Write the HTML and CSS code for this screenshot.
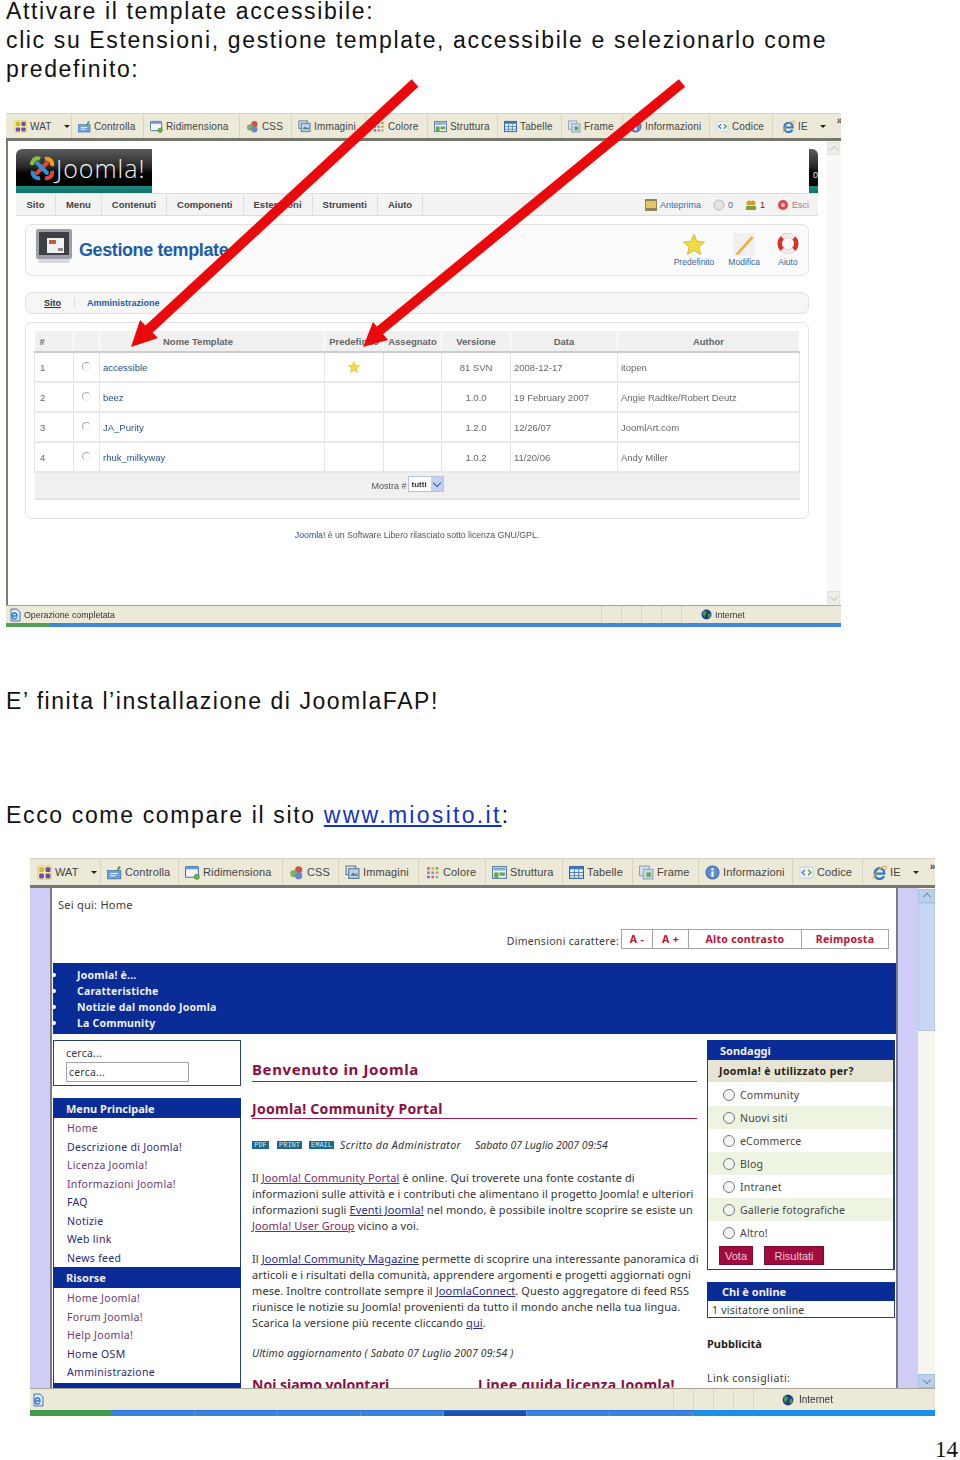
FILE: index.html
```html
<!DOCTYPE html>
<html lang="it">
<head>
  <meta charset="UTF-8" />
  <title>Attivare il template accessibile</title>
  <link rel="stylesheet" href="styles.css">
</head>
<body>
  <svg class="sprite" width="0" height="0">
    <symbol id="i-wat" viewBox="0 0 14 14"><rect x=".5" y=".5" width="13" height="13" rx="1.500" fill="#f2e8a8" stroke="#e0c860" stroke-width=".6"/><rect x="2" y="2" width="4.500" height="4.500" rx="1" fill="#d9b52c"/><rect x="8" y="2" width="4.500" height="4.500" rx="1" fill="#6a4fb0"/><rect x="2" y="8" width="4.500" height="4.500" rx="1" fill="#6a4fb0"/><rect x="8" y="8" width="4.500" height="4.500" rx="1" fill="#6a4fb0"/></symbol>
    <symbol id="i-check" viewBox="0 0 14 14"><rect x="0" y="5" width="13" height="8" fill="#6f9fd8" stroke="#3f6ea8" stroke-width=".6"/><path d="M3 8h7M3 10h5" stroke="#fff"/><path d="M9 5l2-4 2 1-3 4z" fill="#4f9a3f"/></symbol>
    <symbol id="i-resize" viewBox="0 0 14 14"><rect x=".5" y="1.5" width="12" height="10" rx="1" fill="#f4f6fa" stroke="#4f6f9f"/><rect x=".5" y="1.5" width="12" height="2.5" fill="#6f95cf"/><circle cx="11" cy="11" r="2.4" fill="#6fb04f" stroke="#3f7a2f" stroke-width=".6"/></symbol>
    <symbol id="i-css" viewBox="0 0 14 14"><circle cx="9" cy="4.5" r="3.4" fill="#d5504a"/><circle cx="4.5" cy="8" r="3.4" fill="#7fae68"/><circle cx="9" cy="10" r="3.4" fill="#6d86c4"/></symbol>
    <symbol id="i-img" viewBox="0 0 14 14"><rect x="1" y="1" width="9" height="8" fill="#dfe8f2" stroke="#54758f"/><rect x="3.5" y="3.5" width="9.5" height="9" fill="#bcd2e6" stroke="#54758f"/><path d="M5 10l2.5-3 2 2 1.5-1.5 1 2.5z" fill="#54758f"/></symbol>
    <symbol id="i-color" viewBox="0 0 14 14"><g><rect x="2" y="2" width="2.4" height="2.4" fill="#e05a4a"/><rect x="6" y="2" width="2.4" height="2.4" fill="#e0b040"/><rect x="10" y="2" width="2.4" height="2.4" fill="#70b050"/><rect x="2" y="6" width="2.4" height="2.4" fill="#c060b0"/><rect x="6" y="6" width="2.4" height="2.4" fill="#50a0c0"/><rect x="10" y="6" width="2.4" height="2.4" fill="#e09050"/><rect x="2" y="10" width="2.4" height="2.4" fill="#6070c0"/><rect x="6" y="10" width="2.4" height="2.4" fill="#d06080"/><rect x="10" y="10" width="2.4" height="2.4" fill="#80c080"/></g></symbol>
    <symbol id="i-struct" viewBox="0 0 14 14"><rect x=".5" y="1.5" width="13" height="11" fill="#e8eff6" stroke="#5b7fa0"/><rect x="1.5" y="2.5" width="11" height="2.5" fill="#7fa6cc"/><rect x="2" y="7" width="4" height="5" fill="#6aa34f"/><rect x="7" y="7" width="5" height="3" fill="#6aa34f"/></symbol>
    <symbol id="i-table" viewBox="0 0 14 14"><rect x=".5" y="1.5" width="13" height="11" fill="#eaf0f8" stroke="#2f5f9f"/><rect x=".5" y="1.5" width="13" height="2.5" fill="#3f74b8"/><path d="M5 4v8M9 4v8M1 7h12M1 10h12" stroke="#3f74b8" stroke-width=".8"/></symbol>
    <symbol id="i-frame" viewBox="0 0 14 14"><rect x=".5" y="1" width="9" height="9" fill="#d8e6ee" stroke="#88a4b8"/><rect x="4" y="4" width="9" height="9" fill="#c4dae6" stroke="#88a4b8"/><rect x="7" y="7" width="4" height="4" fill="#6aa34f"/></symbol>
    <symbol id="i-info" viewBox="0 0 14 14"><circle cx="7" cy="7" r="6" fill="#5f8fd0" stroke="#3a64a8"/><rect x="6" y="6" width="2" height="5" fill="#fff"/><rect x="6" y="3" width="2" height="2" fill="#fff"/></symbol>
    <symbol id="i-code" viewBox="0 0 14 14"><rect x="1" y="2" width="12" height="10" rx="1" fill="#f4f6fa" stroke="#c9d4e4"/><path d="M5.5 4.5L3 7l2.5 2.500" fill="none" stroke="#4f80c0" stroke-width="1.400"/><path d="M8.500 4.500L11 7 8.500 9.500" fill="none" stroke="#58a040" stroke-width="1.400"/></symbol>
    <symbol id="i-ie" viewBox="0 0 14 14"><path d="M2.500 8h9c0-3-2-5-4.500-5S2.500 5 2.500 8s2 5 4.500 5c2 0 3.500-1 4.200-2.500" fill="none" stroke="#2f78cc" stroke-width="2.200"/><path d="M1 13C3 6 9 1 13 1c1 1 0 3-1 4" fill="none" stroke="#e0b040"/></symbol>
    <symbol id="i-globe" viewBox="0 0 14 14"><circle cx="7" cy="7" r="6.300" fill="#1f3f7f"/><path d="M3 3c2-1 4 0 4 2S4 8 5 10 2 8 2 6zM9 6c2-1 4 0 3 3s-3 3-3 1z" fill="#3fa04f"/></symbol>
    <symbol id="i-page" viewBox="0 0 14 14"><path d="M3 1h6l3 3v9H3z" fill="#dce8f6" stroke="#4f77a8"/><path d="M4 8h5c0-2-1-3-2.500-3S4 6 4 8s1 3 2.500 3c1 0 2-.5 2.500-1.500" fill="none" stroke="#2f78cc" stroke-width="1.300"/></symbol>
    <symbol id="i-star" viewBox="0 0 22 22"><path d="M11 1l3 7 7.500.6-5.700 4.900 1.800 7.400L11 17l-6.600 3.900 1.800-7.400L.5 8.600 8 8z" fill="#f4dc3c" stroke="#c9a828" stroke-width=".8"/></symbol>
  </svg>

  <p class="lead">Attivare il template accessibile:<br>clic su Estensioni, gestione template, accessibile e selezionarlo come<br>predefinito:</p>

  <div class="win win-a">
    <div class="tb">
      <span class="tb-item"><svg><use href="#i-wat"/></svg>WAT<i class="caret"></i></span>
      <span class="tb-item"><svg><use href="#i-check"/></svg>Controlla</span>
      <span class="tb-item"><svg><use href="#i-resize"/></svg>Ridimensiona</span>
      <span class="tb-item"><svg><use href="#i-css"/></svg>CSS</span>
      <span class="tb-item"><svg><use href="#i-img"/></svg>Immagini</span>
      <span class="tb-item"><svg><use href="#i-color"/></svg>Colore</span>
      <span class="tb-item"><svg><use href="#i-struct"/></svg>Struttura</span>
      <span class="tb-item"><svg><use href="#i-table"/></svg>Tabelle</span>
      <span class="tb-item"><svg><use href="#i-frame"/></svg>Frame</span>
      <span class="tb-item"><svg><use href="#i-info"/></svg>Informazioni</span>
      <span class="tb-item"><svg><use href="#i-code"/></svg>Codice</span>
      <span class="tb-item tb-last"><svg><use href="#i-ie"/></svg>IE<i class="caret"></i><b class="more">»</b></span>
    </div>

    <div class="site">
      <div class="admin">
        <div class="brand">
          <div class="logo">
            <svg viewBox="0 0 26 26" width="26" height="26">
              <path d="M8 18L18 8" stroke="#e8452c" stroke-width="4" stroke-linecap="round"/>
              <path d="M8 8l10 10" stroke="#2f8fd8" stroke-width="4" stroke-linecap="round"/>
              <path d="M3 10c0-5 4-8 8-6" fill="none" stroke="#8fc03c" stroke-width="4"/>
              <path d="M16 4c4-1 8 2 7 7" fill="none" stroke="#f09a20" stroke-width="4"/>
              <path d="M4 16c-1 4 2 8 7 7" fill="none" stroke="#2f8fd8" stroke-width="4"/>
              <path d="M23 16c1 4-2 8-7 7" fill="none" stroke="#e8452c" stroke-width="4"/>
            </svg>
            <span class="logo-text">Joomla!</span>
          </div>
          <div class="logo-end">0</div>
        </div>

        <div class="nav">
          <span>Sito</span><span>Menu</span><span>Contenuti</span><span>Componenti</span><span>Estensioni</span><span>Strumenti</span><span>Aiuto</span>
          <div class="nav-right">
            <svg class="ni" viewBox="0 0 12 12"><rect width="12" height="12" fill="#8f8454"/><rect x="1" y="2" width="10" height="7" fill="#e0c860"/></svg><a>Anteprima</a>
            <svg class="ni ni-gap" viewBox="0 0 12 12"><circle cx="6" cy="6" r="5" fill="#e4e4e4" stroke="#bbb"/></svg><a>0</a>
            <svg class="ni ni-gap" viewBox="0 0 12 12"><circle cx="4" cy="4" r="2.500" fill="#c9a030"/><circle cx="8" cy="4" r="2.500" fill="#c9a030"/><rect x="1" y="7" width="10" height="4" fill="#7fa040"/></svg><em>1</em>
            <svg class="ni ni-gap" viewBox="0 0 12 12"><circle cx="6" cy="6" r="5" fill="#d84a50"/><circle cx="6" cy="6" r="2" fill="#f4c4c4"/></svg><a class="exit">Esci</a>
          </div>
        </div>

        <div class="title-box">
          <svg class="tpl-icon" viewBox="0 0 36 34"><rect width="36" height="30" rx="2" fill="#9aa0a6"/><rect x="3" y="3" width="30" height="23" fill="#3c4044"/><rect x="11" y="9" width="17" height="15" fill="#eef0f2"/><rect x="13" y="11" width="7" height="4" fill="#c85a3a"/><rect x="22" y="19" width="5" height="3" fill="#888"/><rect x="2" y="30" width="32" height="4" rx="2" fill="#d4d8dc"/></svg>
          <h1>Gestione template</h1>
          <div class="actions">
            <div class="act act-star"><svg viewBox="0 0 22 22"><use href="#i-star"/></svg>Predefinito</div>
            <div class="act act-edit"><svg viewBox="0 0 22 24"><rect width="22" height="24" fill="#f0f0f0"/><path d="M2 22L19 3l2 2L5 23z" fill="#f0b040"/></svg>Modifica</div>
            <div class="act act-help"><svg viewBox="0 0 24 24"><circle cx="12" cy="11" r="9" fill="none" stroke="#d8342c" stroke-width="5"/><circle cx="12" cy="11" r="9" fill="none" stroke="#f2eeee" stroke-width="5" stroke-dasharray="14 14.270" stroke-dashoffset="-7.100"/></svg>Aiuto</div>
          </div>
        </div>

        <div class="sub-box"><u>Sito</u><span>Amministrazione</span></div>

        <div class="panel">
          <table class="tpl-table">
            <colgroup><col class="c1"><col class="c2"><col class="c3"><col class="c4"><col class="c5"><col class="c6"><col class="c7"><col class="c8"></colgroup>
            <thead>
              <tr><th class="left">#</th><th></th><th class="th-name">Nome Template</th><th>Predefinito</th><th>Assegnato</th><th>Versione</th><th>Data</th><th>Author</th></tr>
            </thead>
            <tbody>
              <tr><td>1</td><td class="mid"><i class="radio"></i></td><td><a>accessible</a></td><td class="mid"><svg class="mini-star" viewBox="0 0 22 22"><use href="#i-star"/></svg></td><td></td><td class="mid">81 SVN</td><td>2008-12-17</td><td>itopen</td></tr>
              <tr><td>2</td><td class="mid"><i class="radio"></i></td><td><a>beez</a></td><td></td><td></td><td class="mid">1.0.0</td><td>19 February 2007</td><td>Angie Radtke/Robert Deutz</td></tr>
              <tr><td>3</td><td class="mid"><i class="radio"></i></td><td><a>JA_Purity</a></td><td></td><td></td><td class="mid">1.2.0</td><td>12/26/07</td><td>JoomlArt.com</td></tr>
              <tr><td>4</td><td class="mid"><i class="radio"></i></td><td><a>rhuk_milkyway</a></td><td></td><td></td><td class="mid">1.0.2</td><td>11/20/06</td><td>Andy Miller</td></tr>
            </tbody>
            <tfoot>
              <tr><td colspan="8"><div class="pager">Mostra #<span class="select">tutti<i></i></span></div></td></tr>
            </tfoot>
          </table>
        </div>

        <p class="credit"><a>Joomla!</a> è un Software Libero rilasciato sotto licenza GNU/GPL.</p>
      </div>
      <div class="scroll scroll-a"><i></i><i class="down"></i></div>
    </div>

    <div class="status">
      <svg class="st-icon"><use href="#i-page"/></svg><span>Operazione completata</span>
      <div class="panels"><i></i><i></i><i></i><i></i><i></i></div>
      <svg class="st-globe"><use href="#i-globe"/></svg><span>Internet</span>
    </div>
    <div class="stripe"><i></i></div>
  </div>

  <p class="line line-done">E’ finita l’installazione di JoomlaFAP!</p>
  <p class="line line-site">Ecco come compare il sito <a href="#">www.miosito.it</a>:</p>

  <div class="win win-b">
    <div class="tb">
      <span class="tb-item"><svg><use href="#i-wat"/></svg>WAT<i class="caret"></i></span>
      <span class="tb-item"><svg><use href="#i-check"/></svg>Controlla</span>
      <span class="tb-item"><svg><use href="#i-resize"/></svg>Ridimensiona</span>
      <span class="tb-item"><svg><use href="#i-css"/></svg>CSS</span>
      <span class="tb-item"><svg><use href="#i-img"/></svg>Immagini</span>
      <span class="tb-item"><svg><use href="#i-color"/></svg>Colore</span>
      <span class="tb-item"><svg><use href="#i-struct"/></svg>Struttura</span>
      <span class="tb-item"><svg><use href="#i-table"/></svg>Tabelle</span>
      <span class="tb-item"><svg><use href="#i-frame"/></svg>Frame</span>
      <span class="tb-item"><svg><use href="#i-info"/></svg>Informazioni</span>
      <span class="tb-item"><svg><use href="#i-code"/></svg>Codice</span>
      <span class="tb-item tb-last"><svg><use href="#i-ie"/></svg>IE<i class="caret"></i><b class="more">»</b></span>
    </div>

    <div class="site">
      <div class="band"></div>
      <div class="portal">
        <div class="crumb">Sei qui: Home</div>
        <div class="fontbar">
          <span class="fontbar-label">Dimensioni carattere:</span>
          <a class="fb1">A -</a><a class="fb2">A +</a><a class="fb3">Alto contrasto</a><a class="fb4">Reimposta</a>
        </div>
        <ul class="topnav">
          <li>Joomla! è...</li>
          <li>Caratteristiche</li>
          <li>Notizie dal mondo Joomla</li>
          <li>La Community</li>
        </ul>

        <div class="cols">
          <div class="col-left">
            <div class="search">
              <span>cerca...</span>
              <div class="search-input">cerca...</div>
            </div>
            <h3 class="menu-head">Menu Principale</h3>
            <ul class="menu">
              <li class="v">Home</li>
              <li>Descrizione di Joomla!</li>
              <li class="v">Licenza Joomla!</li>
              <li class="v">Informazioni Joomla!</li>
              <li>FAQ</li>
              <li>Notizie</li>
              <li>Web link</li>
              <li>News feed</li>
            </ul>
            <h3 class="menu-head menu-head-2">Risorse</h3>
            <ul class="menu menu-2">
              <li class="v">Home Joomla!</li>
              <li class="v">Forum Joomla!</li>
              <li class="v">Help Joomla!</li>
              <li>Home OSM</li>
              <li>Amministrazione</li>
            </ul>
            <div class="menu-end"></div>
          </div>

          <div class="col-main">
            <h1 class="page-title">Benvenuto in Joomla</h1>
            <h2 class="art-title">Joomla! Community Portal</h2>
            <div class="meta">
              <i class="tag tag-pdf">PDF</i><i class="tag tag-print">PRINT</i><i class="tag tag-mail">EMAIL</i>
              <em class="by">Scritto da Administrator</em><em>Sabato 07 Luglio 2007 09:54</em>
            </div>
            <p class="para">Il <a class="v">Joomla! Community Portal</a> è online. Qui troverete una fonte costante di<br>informazioni sulle attività e i contributi che alimentano il progetto Joomla! e ulteriori<br>informazioni sugli <a>Eventi Joomla!</a> nel mondo, è possibile inoltre scoprire se esiste un<br><a class="v">Joomla! User Group</a> vicino a voi.</p>
            <p class="para">Il <a>Joomla! Community Magazine</a> permette di scoprire una interessante panoramica di<br>articoli e i risultati della comunità, apprendere argomenti e progetti aggiornati ogni<br>mese. Inoltre controllate sempre il <a>JoomlaConnect</a>. Questo aggregatore di feed RSS<br>riunisce le notizie su Joomla! provenienti da tutto il mondo anche nella tua lingua.<br>Scarica la versione più recente cliccando <a>qui</a>.</p>
            <p class="updated">Ultimo aggiornamento ( Sabato 07 Luglio 2007 09:54 )</p>
            <div class="more-heads"><span>Noi siamo volontari</span><span>Linee guida licenza Joomla!</span></div>
          </div>

          <div class="col-right">
            <h3 class="mod-head">Sondaggi</h3>
            <div class="poll">
              <div class="poll-q">Joomla! è utilizzato per?</div>
              <div class="opt"><i></i>Community</div>
              <div class="opt alt"><i></i>Nuovi siti</div>
              <div class="opt"><i></i>eCommerce</div>
              <div class="opt alt"><i></i>Blog</div>
              <div class="opt"><i></i>Intranet</div>
              <div class="opt alt"><i></i>Gallerie fotografiche</div>
              <div class="opt"><i></i>Altro!</div>
              <div class="poll-btns"><button class="btn-vote">Vota</button><button class="btn-res">Risultati</button></div>
            </div>
            <h3 class="mod-head mod-head-2">Chi è online</h3>
            <div class="online">1 visitatore online</div>
            <h4 class="ads">Pubblicità</h4>
            <p class="links">Link consigliati:</p>
          </div>
        </div>
      </div>
      <div class="band"></div>
      <div class="scroll scroll-b"><i></i><b></b><i class="down"></i></div>
    </div>

    <div class="status">
      <svg class="st-icon"><use href="#i-page"/></svg><span></span>
      <div class="panels"><i></i><i></i><i></i><i></i><i></i></div>
      <svg class="st-globe"><use href="#i-globe"/></svg><span>Internet</span>
    </div>
    <div class="taskbar"><i class="start"></i><i class="task"></i><i class="task"></i><i class="task"></i><i class="task"></i><i class="task task-on"></i><i class="task"></i><i class="task"></i><i class="tray"></i></div>
  </div>

  <p class="page-num">14</p>

  <svg class="arrows" viewBox="0 0 960 640" width="960" height="640">
    <path d="M415 83L148 330" stroke="#ea0a0c" stroke-width="10"/>
    <path d="M131 347L140 320L158 338Z" fill="#ea0a0c"/>
    <path d="M682 83L378 332" stroke="#ea0a0c" stroke-width="10"/>
    <path d="M363 347L373 322L388 340Z" fill="#ea0a0c"/>
  </svg>
</body>
</html>
```

FILE: styles.css
```css
* {
  margin: 0;
  padding: 0;
  box-sizing: border-box;
}
body {
  position: relative;
  width: 960px;
  height: 1460px;
  overflow: hidden;
  padding-left: 6px;
  background: #fff;
  color: #111;
  font-family: 'Liberation Sans', sans-serif;
}
ul {
  list-style: none;
}
i, em {
  font-style: normal;
}
.sprite {
  position: absolute;
}

/* document text */
.lead, .line {
  font-size: 23px;
  line-height: 29px;
  letter-spacing: 1.63px;
}
.lead {
  margin-top: -3px;
}
.line a {
  color: #1033c8;
  text-decoration: underline;
  letter-spacing: 2.3px;
}
.line-done {
  margin-top: 60px;
  letter-spacing: 1.55px;
}
.line-site {
  margin-top: 85px;
  letter-spacing: 1.65px;
}
.page-num {
  width: 952px;
  margin-top: 20px;
  text-align: right;
  font-family: 'Liberation Serif', serif;
  font-size: 23px;
  line-height: 28px;
}
.arrows {
  position: absolute;
  top: 0;
  left: 0;
  filter: blur(.3px);
}

/* browser window */
.win {
  filter: blur(.3px);
  overflow: hidden;
}
.win-a {
  width: 835px;
  height: 517px;
  margin-top: 26px;
  padding-top: 3px;
}
.win-b {
  width: 905px;
  height: 558px;
  margin: 28px 0 0 24px;
}
.tb {
  display: grid;
  height: 30px;
  background: #ece9d8;
  border-top: 1px solid #d6d3c0;
  border-bottom: 3px solid #77766c;
  color: #444;
}
.win-a .tb {
  grid-template-columns: 66px 72px 96px 52px 74px 62px 70px 64px 61px 87px 63px 68px;
  height: 28px;
  font-size: 10px;
}
.win-b .tb {
  grid-template-columns: 71px 78px 104px 56px 80px 67px 77px 70px 66px 94px 70px 72px;
  font-size: 11px;
}
.tb-item {
  display: flex;
  align-items: center;
  gap: 3px;
  padding-left: 6px;
  border-right: 1px solid #d8d4c0;
  white-space: nowrap;
  letter-spacing: .15px;
}
.tb-item svg {
  width: 13px;
  height: 13px;
  flex: none;
}
.win-b .tb-item svg {
  width: 15px;
  height: 15px;
}
.tb-item:first-child {
  padding-left: 8px;
}
.win-b .tb-item:first-child {
  padding-left: 7px;
}
.tb-last {
  border-right: 0;
  padding-left: 9px;
}
.caret {
  width: 0;
  height: 0;
  margin-left: 9px;
  border: 3px solid transparent;
  border-top: 3px solid #222;
  border-bottom: 0;
}
.more {
  margin: -12px 0 0 8px;
  font-size: 10px;
}
.site {
  display: flex;
  overflow: hidden;
}
.win-a .site {
  height: 464px;
}
.win-b .site {
  height: 500px;
}
.scroll {
  display: flex;
  flex-direction: column;
  justify-content: space-between;
}
.scroll i {
  display: flex;
  align-items: center;
  justify-content: center;
  flex: none;
}
.scroll i::after {
  content: "";
  width: 5px;
  height: 5px;
  margin-top: 2px;
  border: 1px solid #7a8aa8;
  border-width: 1px 0 0 1px;
  transform: rotate(45deg);
}
.scroll i.down::after {
  margin-top: -2px;
  transform: rotate(225deg);
}
.scroll-a {
  width: 15px;
  padding: 1px 1px 1px 0;
  background: #f8f8f6;
}
.scroll-a i {
  height: 13px;
  background: #eceee8;
  border: 1px solid #e2e2dc;
}
.scroll-a i::after {
  border-color: #c4c8c0;
}
.scroll-b {
  width: 17px;
  background: #f6f6f0;
  justify-content: flex-start;
  padding-top: 1px;
}
.scroll-b i {
  height: 14px;
  background: #bcd0ec;
  border: 1px solid #a8c0e4;
}
.scroll-b i.down {
  margin-top: 343px;
}
.scroll-b b {
  flex: none;
  height: 128px;
  background: #c8d8f4;
  border: 1px solid #b4c8e8;
}
.status {
  display: flex;
  align-items: center;
  background: #ece9d8;
  border-top: 1px solid #a8a698;
  color: #333;
  font-size: 8.800px;
}
.win-a .status {
  height: 18px;
  padding-left: 2px;
}
.win-b .status {
  height: 22px;
  padding-left: 1px;
  font-size: 10px;
}
.st-icon {
  width: 14px;
  height: 14px;
  margin-right: 2px;
}
.panels {
  display: flex;
  height: 100%;
}
.win-a .panels {
  margin-left: 486px;
}
.win-b .panels {
  margin-left: 626px;
}
.panels i {
  width: 20px;
  border-left: 1px solid #d8d5c4;
}
.st-globe {
  width: 11px;
  height: 11px;
  margin-right: 3px;
}
.win-b .st-globe {
  margin: 0 5px 0 9px;
  width: 12px;
  height: 12px;
}
.stripe {
  height: 4px;
  background: #3d86d8;
}
.stripe i {
  display: block;
  width: 44px;
  height: 4px;
  background: #54a058;
}
.taskbar {
  display: flex;
  height: 6px;
  background: #2a6fd0;
}
.taskbar .start {
  width: 82px;
  background: #3f9a4e;
}
.task {
  width: 83px;
  margin-top: 1px;
  border-right: 1px solid #5a94e0;
  background: #3f80dc;
}
.task-on {
  background: #1c4eaa;
}
.tray {
  flex: 1;
  background: #1e90e4;
}

/* joomla admin */
.admin {
  flex: 1;
  padding: 8px 9px 0 8px;
  background: #fff;
  border-left: 2px solid #7c7c70;
  color: #666;
  font-size: 9.500px;
}
.brand {
  display: flex;
  justify-content: space-between;
  height: 44px;
}
.logo, .logo-end {
  background: linear-gradient(#5c5c5c 0, #2a2a2a 40%, #050505 55%, #000 84%, #1e8a80 84%, #147068 100%);
  border-radius: 6px 6px 0 0;
}
.logo {
  display: flex;
  align-items: center;
  gap: 1px;
  width: 136px;
  padding: 0 0 6px 13px;
  border-top-right-radius: 0;
}
.logo-text {
  color: #f2f2f2;
  font-family: 'Open Sans', sans-serif;
  font-weight: 300;
  font-size: 25px;
  letter-spacing: 1px;
}
.logo-end {
  width: 9px;
  border-top-left-radius: 0;
  color: #eee;
  font-size: 9px;
  line-height: 52px;
  text-align: right;
  overflow: hidden;
}
.nav {
  display: flex;
  align-items: center;
  height: 23px;
  background: #f3f3f3;
  border-top: 1px solid #ddd;
  border-bottom: 1px solid #ddd;
  color: #444;
  font-weight: bold;
}
.nav > span {
  padding: 0 10px;
  height: 100%;
  line-height: 21px;
  border-right: 1px solid #ddd;
}
.nav > span:first-child {
  padding: 0 10.500px;
}
.nav-right {
  display: flex;
  align-items: center;
  margin-left: auto;
  padding-right: 9px;
  font-weight: normal;
  font-size: 9px;
}
.nav-right a {
  color: #3a6ca4;
}
.nav-right em {
  color: #333;
}
.nav-right .exit {
  color: #c07070;
}
.ni {
  width: 12px;
  height: 12px;
  margin-right: 3px;
}
.ni-gap {
  margin-left: 12px;
}
.title-box, .sub-box, .panel {
  margin: 8px 9px 0;
  border: 1px solid #e2e2e2;
  border-radius: 7px;
  background: #fbfbfb;
}
.title-box {
  display: flex;
  align-items: center;
  height: 52px;
  padding-left: 10px;
}
.tpl-icon {
  width: 36px;
  height: 34px;
  margin-top: -8px;
}
.title-box h1 {
  margin-left: 7px;
  color: #1c5ba8;
  font-size: 18px;
  letter-spacing: -.4px;
}
.actions {
  display: flex;
  margin-left: auto;
  padding-right: 9px;
  color: #3a6690;
  font-size: 8.500px;
}
.act {
  display: flex;
  flex-direction: column;
  align-items: center;
  gap: 1px;
  white-space: nowrap;
}
.act svg {
  width: 22px;
  height: 23px;
  margin-top: -1px;
}
.act-edit {
  margin-left: 14px;
}
.act-help {
  margin-left: 17px;
}
.sub-box {
  display: flex;
  align-items: center;
  height: 22px;
  margin-top: 16px;
  padding-left: 18px;
  background: #f6f6f6;
  color: #1c5ba8;
  font-weight: bold;
  font-size: 9px;
}
.sub-box u {
  padding-right: 13px;
  border-right: 1px solid #ddd;
  color: #333;
}
.sub-box span {
  padding-left: 12px;
}
.panel {
  height: 197px;
  padding: 8px 8px 0;
  background: #fff;
}
.tpl-table {
  width: 765px;
  table-layout: fixed;
  border-collapse: collapse;
}
.c1 { width: 39px; }
.c2 { width: 26px; }
.c3 { width: 225px; }
.c4 { width: 59px; }
.c5 { width: 58px; }
.c6 { width: 69px; }
.c7 { width: 107px; }
.c8 { width: 182px; }
.tpl-table th {
  height: 21px;
  background: #f0f0f0;
  border-right: 1px solid #fff;
  border-bottom: 2px solid #ccc;
  color: #666;
  font-size: 9.500px;
  white-space: nowrap;
  overflow: hidden;
}
.tpl-table th.left {
  text-align: left;
  padding-left: 5px;
}
.tpl-table th.th-name {
  padding-right: 28px;
}
.tpl-table td {
  height: 30px;
  padding-left: 3px;
  border-right: 1px solid #e4e4e4;
  border-bottom: 2px solid #e8e8e8;
  border-left: 1px solid #e4e4e4;
  white-space: nowrap;
}
.tpl-table td:first-child {
  padding-left: 5px;
}
.tpl-table td.mid {
  padding-left: 0;
  text-align: center;
}
.tpl-table a {
  color: #23558c;
}
.radio {
  display: inline-block;
  width: 9px;
  height: 9px;
  border: 1px solid #aaa;
  border-right-color: #eee;
  border-bottom-color: #eee;
  border-radius: 50%;
}
.mini-star {
  width: 12px;
  height: 12px;
  vertical-align: middle;
}
.tpl-table tfoot td {
  height: 27px;
  padding: 0;
  background: #f0f0f0;
  border: 0;
  border-top: 1px solid #bbb;
  border-bottom: 2px solid #e4e4e4;
}
.pager {
  display: flex;
  justify-content: center;
  align-items: center;
  padding-right: 24px;
  color: #555;
  font-size: 9px;
}
.select {
  display: flex;
  align-items: center;
  justify-content: space-between;
  width: 36px;
  height: 16px;
  margin: -3px 0 0 1px;
  padding-left: 3px;
  background: #fff;
  border: 1px solid #b4c4dc;
  color: #333;
  font-weight: bold;
  font-size: 8px;
}
.select i {
  display: flex;
  justify-content: center;
  width: 12px;
  height: 100%;
  background: #c2d2f0;
}
.select i::after {
  content: "";
  width: 5px;
  height: 5px;
  margin-top: 3px;
  border: 1.500px solid #3a5a98;
  border-width: 0 1.500px 1.500px 0;
  transform: rotate(45deg);
}
.credit {
  margin-top: 8px;
  line-height: 16px;
  text-align: center;
  color: #555;
  font-size: 8.800px;
  letter-spacing: -.05px;
}
.credit a {
  color: #23558c;
}

/* public site */
.band {
  width: 20px;
  background: #cfcdf6;
}
.band + .portal {
  border-left: 2px solid #7c7c84;
}
.portal {
  width: 848px;
  padding-left: 1px;
  background: #fff;
  border-right: 2px solid #7c7c84;
  font-family: 'Noto Sans', sans-serif;
  font-size: 10.500px;
  color: #3a3a3a;
}
.crumb {
  height: 34px;
  padding: 8px 0 0 5px;
  line-height: 18px;
  font-size: 11px;
  letter-spacing: .25px;
}
.fontbar {
  display: flex;
  align-items: center;
  justify-content: flex-end;
  height: 20px;
  margin: 7px 0 14px;
  padding-right: 7px;
  font-size: 10.500px;
  letter-spacing: .3px;
}
.fontbar-label {
  margin: 4px 2px 0 0;
}
.fontbar a {
  height: 20px;
  line-height: 18px;
  text-align: center;
  border: 1px solid #a4a4a4;
  border-left-width: 0;
  color: #c01030;
  font-weight: bold;
}
.fontbar .fb1 {
  width: 32px;
  border-left-width: 1px;
}
.fb2 {
  width: 36px;
}
.fb3 {
  width: 113px;
}
.fb4 {
  width: 87px;
}
.topnav {
  height: 71px;
  padding-top: 4px;
  background: #0a2c96;
  color: #f0f0f6;
  font-weight: bold;
  font-size: 10.500px;
  line-height: 16px;
  letter-spacing: .2px;
}
.topnav li {
  display: flex;
  align-items: center;
  gap: 21px;
}
.topnav li::before {
  content: "";
  width: 3px;
  height: 4px;
  background: #fff;
  border-radius: 0 2px 2px 0;
}
.cols {
  display: grid;
  grid-template-columns: 188px 446px 188px;
  column-gap: 10px;
  margin-top: 6px;
}
.search {
  height: 46px;
  padding: 4px 0 0 12px;
  border: 1px solid #2a3f78;
  line-height: 16px;
  font-size: 10.500px;
  letter-spacing: .2px;
}
.search-input {
  width: 123px;
  height: 20px;
  margin-top: 1px;
  padding-left: 2px;
  background: #fff;
  border: 1px solid #a0a4a8;
  line-height: 18px;
}
.menu-head {
  height: 20px;
  margin-top: 12px;
  padding-left: 13px;
  background: #0a2c96;
  color: #f0f0f6;
  font-size: 11px;
  line-height: 21px;
}
.menu-head-2 {
  height: 21px;
  margin: 0;
}
.menu {
  height: 149px;
  padding-top: 1px;
  border: 1px solid #2a3f78;
  border-width: 0 1px;
  color: #2a2a78;
}
.menu-2 {
  height: 95px;
}
.menu li {
  height: 18.550px;
  padding-left: 13px;
  line-height: 18.550px;
  letter-spacing: .3px;
}
.menu li.v {
  color: #6a3a72;
}
.menu-end {
  height: 8px;
  background: #0a2c96;
}
.col-main {
  padding-left: 1px;
  color: #333;
}
.page-title {
  padding: 19px 0 1px;
  border-bottom: 1px solid #a01c4a;
  color: #8e0c3e;
  font-size: 15px;
  line-height: 21px;
  letter-spacing: .6px;
}
.art-title {
  margin-top: 18px;
  border-bottom: 1px solid #a01c4a;
  color: #8e0c3e;
  font-size: 14px;
  line-height: 18px;
  letter-spacing: .3px;
}
.meta {
  display: flex;
  align-items: center;
  height: 16px;
  margin-top: 18px;
  font-style: italic;
  font-size: 10.500px;
}
.meta em {
  font-style: italic;
}
.tag {
  height: 8px;
  margin-right: 8px;
  background: #1a6a90;
  color: #cfe8f4;
  font-style: normal;
  font-family: 'Liberation Mono', monospace;
  font-size: 7px;
  line-height: 8px;
  text-align: center;
}
.tag-pdf {
  width: 17px;
}
.tag-print {
  width: 25px;
  margin-right: 7px;
}
.tag-mail {
  width: 25px;
  margin-right: 6px;
}
.by {
  width: 135px;
  letter-spacing: .4px;
}
.para {
  margin-top: 17px;
  line-height: 16px;
  font-size: 11px;
  letter-spacing: .1px;
  white-space: nowrap;
}
.para + .para {
  line-height: 15.900px;
}
.para a {
  color: #2a2a90;
  text-decoration: underline;
}
.para a.v {
  color: #7a2a6a;
}
.updated {
  margin-top: 14px;
  line-height: 16px;
  font-style: italic;
  font-size: 10.500px;
  letter-spacing: .15px;
}
.more-heads {
  display: flex;
  margin-top: 15px;
  color: #8e0c3e;
  font-weight: bold;
  font-size: 14px;
  line-height: 18px;
  letter-spacing: .3px;
  white-space: nowrap;
}
.more-heads span:first-child {
  width: 226px;
  letter-spacing: 0;
}
.mod-head {
  height: 20px;
  padding-left: 13px;
  background: #0a2c96;
  color: #f0f0f6;
  font-size: 11px;
  line-height: 21px;
}
.poll {
  height: 210px;
  border: 1px solid #2a3f78;
  border-top: 0;
  border-right-width: 2px;
  color: #444;
}
.poll-q {
  height: 22px;
  margin-bottom: 1px;
  padding-left: 11px;
  background: #e6e4d2;
  color: #222;
  font-weight: bold;
  line-height: 22px;
  letter-spacing: .4px;
}
.opt {
  display: flex;
  align-items: center;
  gap: 5px;
  height: 23px;
  padding-left: 15px;
  letter-spacing: .2px;
}
.opt.alt {
  background: #eef4e2;
}
.opt i {
  width: 12px;
  height: 12px;
  background: #f4f4f0;
  border: 1px solid #6c7a7c;
  border-radius: 50%;
}
.poll-btns {
  display: flex;
  gap: 11px;
  padding: 2px 0 0 11px;
}
.poll-btns button {
  height: 19px;
  background: #a10c40;
  border: 1px solid #7c0a34;
  color: #e8c8d0;
  font-family: 'Liberation Sans', sans-serif;
  font-size: 11px;
}
.btn-vote {
  width: 34px;
}
.btn-res {
  width: 60px;
}
.mod-head-2 {
  height: 19px;
  margin-top: 12px;
  padding-left: 15px;
  line-height: 20px;
}
.online {
  height: 17px;
  padding-left: 4px;
  border: 1px solid #2a3f78;
  border-top: 0;
  line-height: 18px;
  letter-spacing: .25px;
}
.ads {
  margin-top: 18px;
  color: #222;
  font-size: 11px;
  line-height: 16px;
}
.links {
  margin-top: 18px;
  line-height: 16px;
  letter-spacing: .45px;
}
```
